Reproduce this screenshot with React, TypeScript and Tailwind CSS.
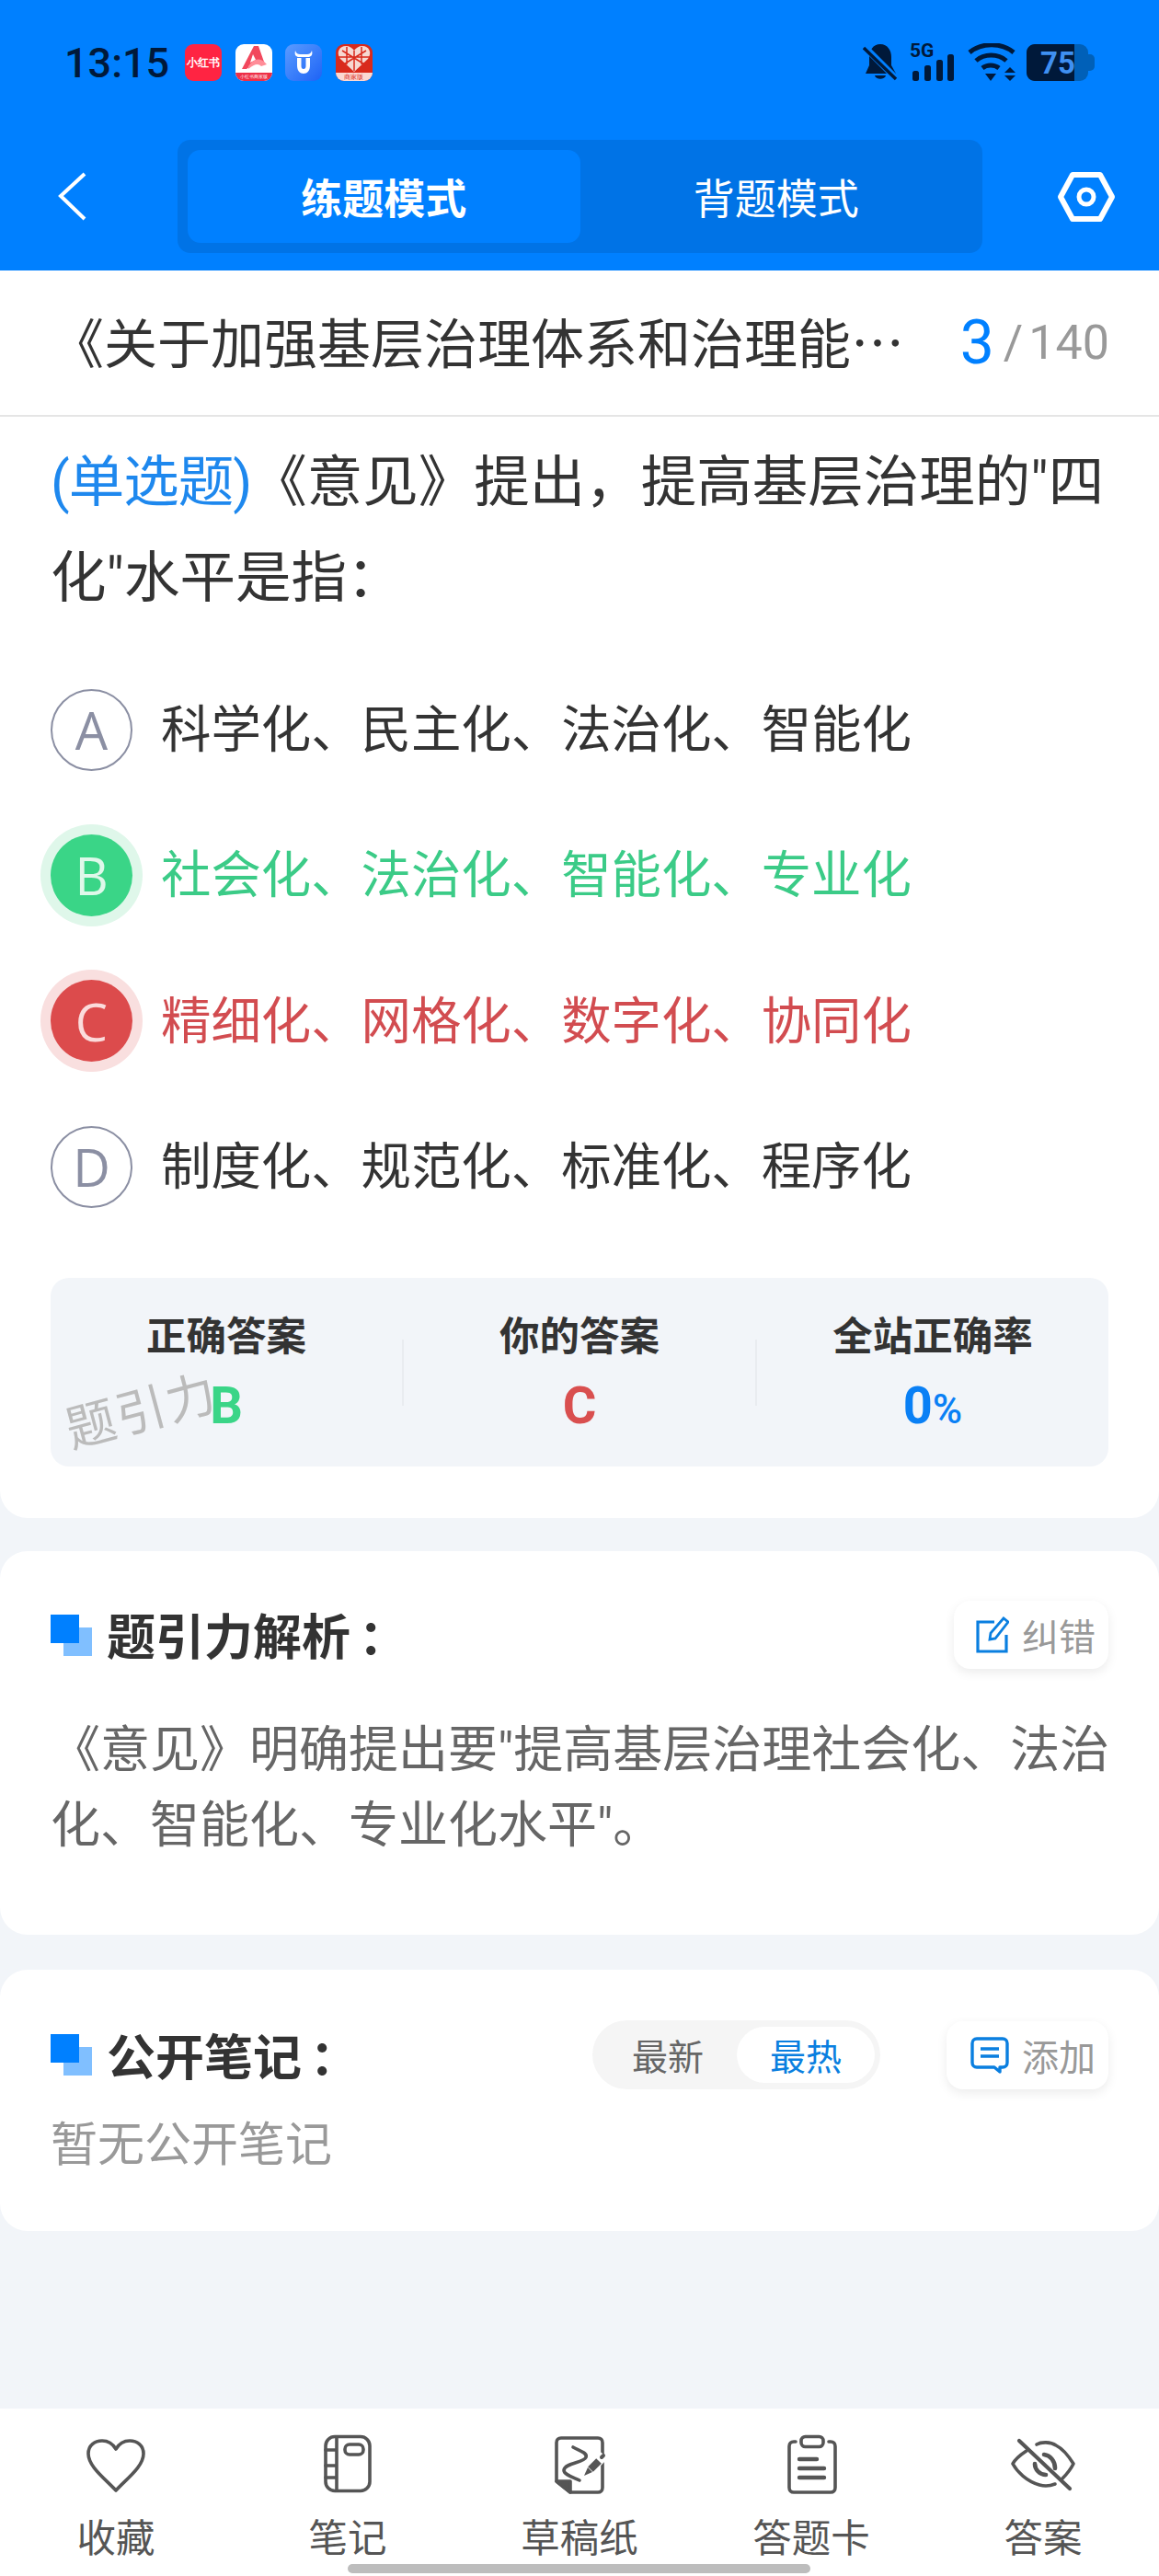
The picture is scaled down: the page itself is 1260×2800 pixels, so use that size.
import React from "react";

const cjk = "font-['Noto_Sans_CJK_SC',sans-serif]";
const latin = "font-['Roboto','Noto_Sans_CJK_SC',sans-serif]";

function Mark() {
  return (
    <svg width="45" height="45" viewBox="0 0 45 45" className="shrink-0">
      <rect x="14" y="14" width="31" height="31" fill="#80bfff" />
      <rect x="0" y="0" width="31" height="31" fill="#0080ff" />
    </svg>
  );
}

function AppIcons() {
  return (
    <div className="flex gap-[14.5px] ml-[21px]">
      <div className="w-[40px] h-[40px] rounded-[9px] bg-[#ff2442] flex items-center justify-center text-white text-[11.5px] font-bold leading-none whitespace-nowrap">小红书</div>
      <div className="w-[40px] h-[40px] rounded-[9px] bg-white overflow-hidden flex flex-col">
        <svg width="40" height="31" viewBox="0 0 40 31">
          <path d="M20 2 L25 2 L32 22 C28 17 24 18 20 21 L12 27 L7 27 Z" fill="#f2485d" />
          <path d="M19 11 L16 20 L22 17 Z" fill="#fff" />
          <path d="M14 24 C20 15 27 14 34 22 L28 24 C25 21 21 21 14 27 Z" fill="#ff8d98" />
        </svg>
        <div className="flex-1 bg-[#ee2f47] text-white text-[5px] leading-[9px] text-center whitespace-nowrap overflow-hidden">小红书商家版</div>
      </div>
      <div className="w-[40px] h-[40px] rounded-[9px] bg-gradient-to-br from-[#5a9bff] to-[#1e62f5] flex items-center justify-center">
        <svg width="32" height="32" viewBox="0 0 32 32">
          <path d="M7 3 C6 7 7 9 10 10 H22 C25 9 26 7 25 3 C24 6 22 7 20 7 H12 C10 7 8 6 7 3Z" fill="#fff" />
          <path d="M9 11 V19 C9 25 12 28 16 28 C20 28 23 25 23 19 V11 H18.5 V20 C18.5 22 17.5 23 16 23 C14.5 23 13.5 22 13.5 20 V11 Z" fill="#fff" />
        </svg>
      </div>
      <div className="w-[40px] h-[40px] rounded-[9px] bg-[#d92a1c] overflow-hidden flex flex-col">
        <svg width="40" height="31" viewBox="0 0 40 31">
          <path d="M20 30 L5 16 C0 9 4 2 11 2 C15 2 18 4 20 7 C22 4 25 2 29 2 C36 2 40 9 35 16 Z" fill="#f6d9d2" />
          <path d="M20 7 V29 M7 7 L33 23 M33 7 L7 23 M3 14 H37 M12 3 V22 M28 3 V22" stroke="#d92a1c" strokeWidth="1.5" />
        </svg>
        <div className="flex-1 bg-[#fbd9d3] text-[#d92a1c] text-[6.5px] leading-[9px] text-center whitespace-nowrap overflow-hidden">商家版</div>
      </div>
    </div>
  );
}

function StatusRight() {
  const d = "#00193a";
  return (
    <div className="ml-auto mr-[70px] flex items-center">
      <svg width="39" height="42" viewBox="0 0 39 42">
        <path d="M19 1 C27 1 31 8 31 15 V24 L36 33 H3 L7 24 V15 C7 8 11 1 19 1Z" fill={d} />
        <path d="M13 35 C14 40 24 40 25 35Z" fill={d} />
        <path d="M2 4 L36 38" stroke="#0080ff" strokeWidth="7" />
        <path d="M1 5 L36 39" stroke={d} strokeWidth="3.4" />
      </svg>
      <svg width="50" height="42" viewBox="0 0 50 42" className="ml-[12px]">
        <text x="0" y="15" fontFamily="Roboto" fontWeight="700" fontSize="21" fill={d}>5G</text>
        <rect x="3" y="30" width="7" height="11" rx="2.5" fill={d} />
        <rect x="16" y="24" width="7" height="17" rx="2.5" fill={d} />
        <rect x="29" y="18" width="7" height="23" rx="2.5" fill={d} />
        <rect x="41" y="12" width="7" height="29" rx="2.5" fill={d} />
      </svg>
      <svg width="53" height="42" viewBox="0 0 53 42" className="ml-[13px]" fill="none">
        <path d="M2 10 C15 -1 37 -1 50 10" stroke={d} strokeWidth="5" />
        <path d="M9 19 C18 11 33 11 42 19" stroke={d} strokeWidth="5" />
        <path d="M16 27 C21 23 29 23 34 27" stroke={d} strokeWidth="5" />
        <path d="M19 33 H31 L25 41 Z" fill={d} />
        <path d="M46 26 L52 32 H40 Z" fill={d} />
        <path d="M40 35 H52 L46 41 Z" fill={d} />
      </svg>
      <svg width="74" height="42" viewBox="0 0 74 42" className="ml-[11px]">
        <rect x="60" y="12" width="14" height="18" rx="5" fill="#0060b8" />
        <rect x="0" y="1" width="67" height="40" rx="9" fill="#0060b8" />
        <path d="M9 1 H52 V41 H9 C4 41 0 37 0 32 V10 C0 5 4 1 9 1Z" fill={d} />
        <text x="34" y="33" textAnchor="middle" fontFamily="Roboto" fontWeight="700" fontSize="33" fill="#3f90f2">75</text>
      </svg>
    </div>
  );
}

function Option({ letter, text, state }: { letter: string; text: string; state?: "right" | "wrong" }) {
  const circle =
    state === "right"
      ? "bg-[#3ad587] text-[#dff8ea] ring-[11px] ring-[#dff7ea]"
      : state === "wrong"
      ? "bg-[#dc4b4c] text-[#fbdcdc] ring-[11px] ring-[#f9dfdf]"
      : "border-[2px] border-[#8b8fa3] text-[#8b8fa3]";
  const color = state === "right" ? "text-[#3bcb87]" : state === "wrong" ? "text-[#d24c50]" : "text-[#333333]";
  return (
    <div className="h-[158.3px] flex items-center pl-[55px]">
      <div className={`w-[89px] h-[89px] rounded-full flex items-center justify-center shrink-0 text-[56px] leading-none font-['Open_Sans',sans-serif] ${circle}`}>{letter}</div>
      <div className={`ml-[31px] mb-[8px] text-[54.4px] leading-none whitespace-nowrap ${cjk} ${color}`}>{text}</div>
    </div>
  );
}

function Stat({ label, children }: { label: string; children: React.ReactNode }) {
  return (
    <div className="flex-1 flex flex-col items-center pt-[33px] h-full">
      <div className={`text-[43.5px] leading-[56px] font-bold text-[#333333] whitespace-nowrap ${cjk}`}>{label}</div>
      <div className="mt-[20px] h-[60px] leading-[60px] text-[56px] font-bold font-['Roboto',sans-serif] whitespace-nowrap">{children}</div>
    </div>
  );
}

function ActionButton({ icon, label, pad }: { icon: React.ReactNode; label: string; pad: string }) {
  return (
    <div className={`h-[74px] rounded-[18px] bg-white shadow-[0_4px_12px_rgba(0,0,0,0.08)] flex items-center pr-[14px] ${pad}`}>
      {icon}
      <span className={`ml-[14px] text-[40px] leading-none text-[#999999] whitespace-nowrap ${cjk}`}>{label}</span>
    </div>
  );
}

function NavItem({ icon, label }: { icon: React.ReactNode; label: string }) {
  return (
    <div className="flex-1 flex flex-col items-center pt-[29px]">
      <svg width="64" height="64" viewBox="0 0 64 64" fill="none" stroke="#555555" strokeWidth="3.6" strokeLinecap="round" strokeLinejoin="round" className="overflow-visible">
        {icon}
      </svg>
      <div className={`mt-[15px] text-[42.5px] leading-[60px] text-[#555555] whitespace-nowrap ${cjk}`}>{label}</div>
    </div>
  );
}

export default function App() {
  return (
    <div className="relative w-[1260px] h-[2800px] bg-[#f2f5f9] flex flex-col overflow-hidden">
      {/* header */}
      <div className="bg-[#0080ff] h-[294px] shrink-0 flex flex-col">
        <div className="h-[136px] flex items-center pl-[70px] mb-[16px]">
          <div className="w-[110px] text-[45px] leading-none font-medium font-['Roboto',sans-serif] text-[#00193a] whitespace-nowrap">13:15</div>
          <AppIcons />
          <StatusRight />
        </div>
        <div className="h-[123px] flex items-center">
          <div className="w-[193px] pl-[63px]">
            <svg width="32" height="54" viewBox="0 0 32 54" fill="none">
              <path d="M29 2 L3 26 L29 51" stroke="#fff" strokeWidth="4" />
            </svg>
          </div>
          <div className="w-[875px] h-[123px] rounded-[14px] bg-[#0073e6] p-[11px] flex">
            <div className={`flex-1 rounded-[14px] bg-[#0080ff] flex items-center justify-center text-white font-bold text-[45px] leading-none ${cjk}`}>练题模式</div>
            <div className={`flex-1 flex items-center justify-center text-white text-[45px] leading-none ${cjk}`}>背题模式</div>
          </div>
          <div className="pl-[81px]">
            <svg width="64" height="56" viewBox="0 0 64 56" fill="none" stroke="#fff" strokeLinejoin="round">
              <path d="M17 4 H47 L60 28 L47 52 H17 L4 28 Z" strokeWidth="6" />
              <circle cx="32" cy="28" r="8" strokeWidth="5" />
            </svg>
          </div>
        </div>
      </div>

      {/* question card */}
      <div className="bg-white rounded-b-[30px] h-[1356px] shrink-0 flex flex-col">
        <div className="h-[159px] shrink-0 border-b-[2px] border-[#e5e5e5] flex items-center pl-[55px] pr-[54px]">
          <div className={`mb-[6px] text-[58px] leading-none text-[#333333] whitespace-nowrap ${cjk}`}>《关于加强基层治理体系和治理能…</div>
          <div className="ml-auto flex items-center font-['Roboto',sans-serif] whitespace-nowrap">
            <span className="text-[66px] leading-none text-[#0080ff]">3</span>
            <span className="ml-[10px] text-[52px] leading-none text-[#999999]">/</span>
            <span className="ml-[6px] text-[52px] leading-none text-[#999999]">140</span>
          </div>
        </div>
        <div className={`mt-[20px] mx-[55px] -mr-[0px] pr-[50px] text-[60.5px] leading-[104px] text-[#333333] ${latin}`}>
          <span className="text-[#1e88ee] tracking-[-1px]">(单选题)</span>《意见》提出，提高基层治理的"四<br />化"水平是指：
        </div>
        <div className="mt-[33px]">
          <Option letter="A" text="科学化、民主化、法治化、智能化" />
          <Option letter="B" text="社会化、法治化、智能化、专业化" state="right" />
          <Option letter="C" text="精细化、网格化、数字化、协同化" state="wrong" />
          <Option letter="D" text="制度化、规范化、标准化、程序化" />
        </div>
        <div className="relative mt-[42px] mx-[55px] h-[205px] rounded-[20px] bg-[#f2f5f9] flex items-center">
          <Stat label="正确答案"><span className="text-[#3ad587]">B</span></Stat>
          <div className="w-[2px] h-[72px] bg-[#e9ecf0]" />
          <Stat label="你的答案"><span className="text-[#d94f4f]">C</span></Stat>
          <div className="w-[2px] h-[72px] bg-[#e9ecf0]" />
          <Stat label="全站正确率">
            <span className="text-[#0a80f5]">0</span>
            <span className="text-[#0a80f5] text-[44px] font-medium">%</span>
          </Stat>
          <div className={`absolute left-[14px] top-[114px] rotate-[-15deg] text-[#bbbbbb] text-[54px] leading-none whitespace-nowrap tracking-[2px] ${cjk}`}>题引力</div>
        </div>
      </div>

      {/* analysis */}
      <div className="mt-[36px] h-[417px] shrink-0 bg-white rounded-[30px] px-[55px] pt-[54px]">
        <div className="flex items-center justify-between h-[74px]">
          <div className="flex items-center gap-[16px]">
            <Mark />
            <div className={`mb-[2px] text-[53px] leading-none font-bold text-[#333333] whitespace-nowrap ${cjk}`}>题引力解析<span className="ml-[9px]">：</span></div>
          </div>
          <ActionButton
            label="纠错"
            pad="pl-[24px]"
            icon={
              <svg width="36" height="40" viewBox="0 0 36 40" fill="none" stroke="#0a7fe0" strokeWidth="3.2">
                <path d="M20 6 H2 V38 H33 V20" />
                <path d="M15 25 L16 18 L30 2 L35 6 L21 24 Z" strokeWidth="2.8" />
              </svg>
            }
          />
        </div>
        <div className={`mt-[48px] -mr-[4px] text-[54px] leading-[82px] text-[#666666] ${latin}`}>
          《意见》明确提出要"提高基层治理社会化、法治化、智能化、专业化水平"。
        </div>
      </div>

      {/* notes */}
      <div className="mt-[38px] h-[284px] shrink-0 bg-white rounded-[30px] px-[55px] pt-[55px]">
        <div className="flex items-center h-[75px]">
          <Mark />
          <div className={`ml-[16px] text-[53px] leading-none font-bold text-[#333333] whitespace-nowrap ${cjk}`}>公开笔记<span className="ml-[9px]">：</span></div>
          <div className="ml-auto w-[313px] h-[75px] rounded-full bg-[#f5f5f5] flex items-center pl-[43px] pr-[6px]">
            <span className={`text-[39px] leading-none text-[#666666] whitespace-nowrap ${cjk}`}>最新</span>
            <span className={`ml-auto w-[150px] h-[61px] rounded-full bg-white flex items-center justify-center text-[39px] leading-none text-[#0a7fe0] whitespace-nowrap ${cjk}`}>最热</span>
          </div>
          <div className="ml-[72px]">
            <ActionButton
              label="添加"
              pad="pl-[26px]"
              icon={
                <svg width="42" height="40" viewBox="0 0 42 40" fill="none" stroke="#0a7fe0" strokeWidth="3.4" strokeLinejoin="round">
                  <path d="M7 2 H35 C38 2 40 4 40 7 V28 C40 31 38 33 35 33 H32 V38 L26 33 H7 C4 33 2 31 2 28 V7 C2 4 4 2 7 2Z" />
                  <path d="M11 13 H31 M11 21 H31" strokeWidth="3.6" />
                </svg>
              }
            />
          </div>
        </div>
        <div className={`mt-[21px] text-[51px] leading-[70px] text-[#999999] whitespace-nowrap ${cjk}`}>暂无公开笔记</div>
      </div>

      {/* bottom bar */}
      <div className="mt-auto h-[182px] shrink-0 bg-white flex">
        <NavItem
          label="收藏"
          icon={<path d="M32 60 C20 47 2 34 2 20 C2 11 9 6 17 6 C24 6 29 10 32 15 C35 10 40 6 47 6 C55 6 62 11 62 20 C62 34 44 47 32 60Z" />}
        />
        <NavItem
          label="笔记"
          icon={
            <>
              <rect x="8" y="1.5" width="48" height="59" rx="10" />
              <path d="M20 2 V60 M8 16 H20 M8 33 H20 M8 46 H20" />
              <rect x="29" y="10" width="20" height="11" rx="5" />
            </>
          }
        />
        <NavItem
          label="草稿纸"
          icon={
            <>
              <path d="M7 50 V8 C7 5 9 3 12 3 H52 C55 3 57 5 57 8 V57 C57 60 55 62 52 62 H22 L7 50" />
              <path d="M7 50 H22 V62 Z" fill="#555555" />
              <path d="M25 13 C32 17 41 19 39 24 C37 30 16 30 15 38 C15 43 26 46 32 49" />
              <path d="M59 22 L50 31" stroke="#ffffff" strokeWidth="10" strokeLinecap="butt" />
              <path d="M53 28 L44 37" strokeWidth="8" strokeLinecap="butt" />
              <path d="M41 35 L46 40 L37 44 Z" fill="#555555" stroke="none" />
              <path d="M58 22 L56 24" strokeWidth="4" />
            </>
          }
        />
        <NavItem
          label="答题卡"
          icon={
            <>
              <path d="M15 7 H13 C10 7 8 9 8 12 V57 C8 60 10 62 13 62 H53 C56 62 58 60 58 57 V12 C58 9 56 7 53 7 H51" />
              <rect x="21" y="1.5" width="24" height="11" rx="4.5" />
              <path d="M19 26 H38 M19 36 H46 M19 46 H46" strokeWidth="4.4" />
            </>
          }
        />
        <NavItem
          label="答案"
          icon={
            <>
              <path d="M25 10 C30 7 40 7 46 11 C54 15 60 23 65 31 C62 37 58 42 53 47" />
              <path d="M-1 31 C3 24 8 21 14 17 M-1 31 C4 40 14 50 28 54 C35 56 40 55 45 53" />
              <path d="M33 21 C40 22 45 28 45 36" strokeWidth="4.6" />
              <path d="M23 31 C23 37 28 43 35 43" strokeWidth="4.6" />
              <path d="M6 6 L61 58" strokeWidth="4.2" />
            </>
          }
        />
      </div>
      <div className="absolute left-[378px] bottom-[3px] w-[503px] h-[10px] rounded-full bg-[#bdbdbd]" />
    </div>
  );
}
